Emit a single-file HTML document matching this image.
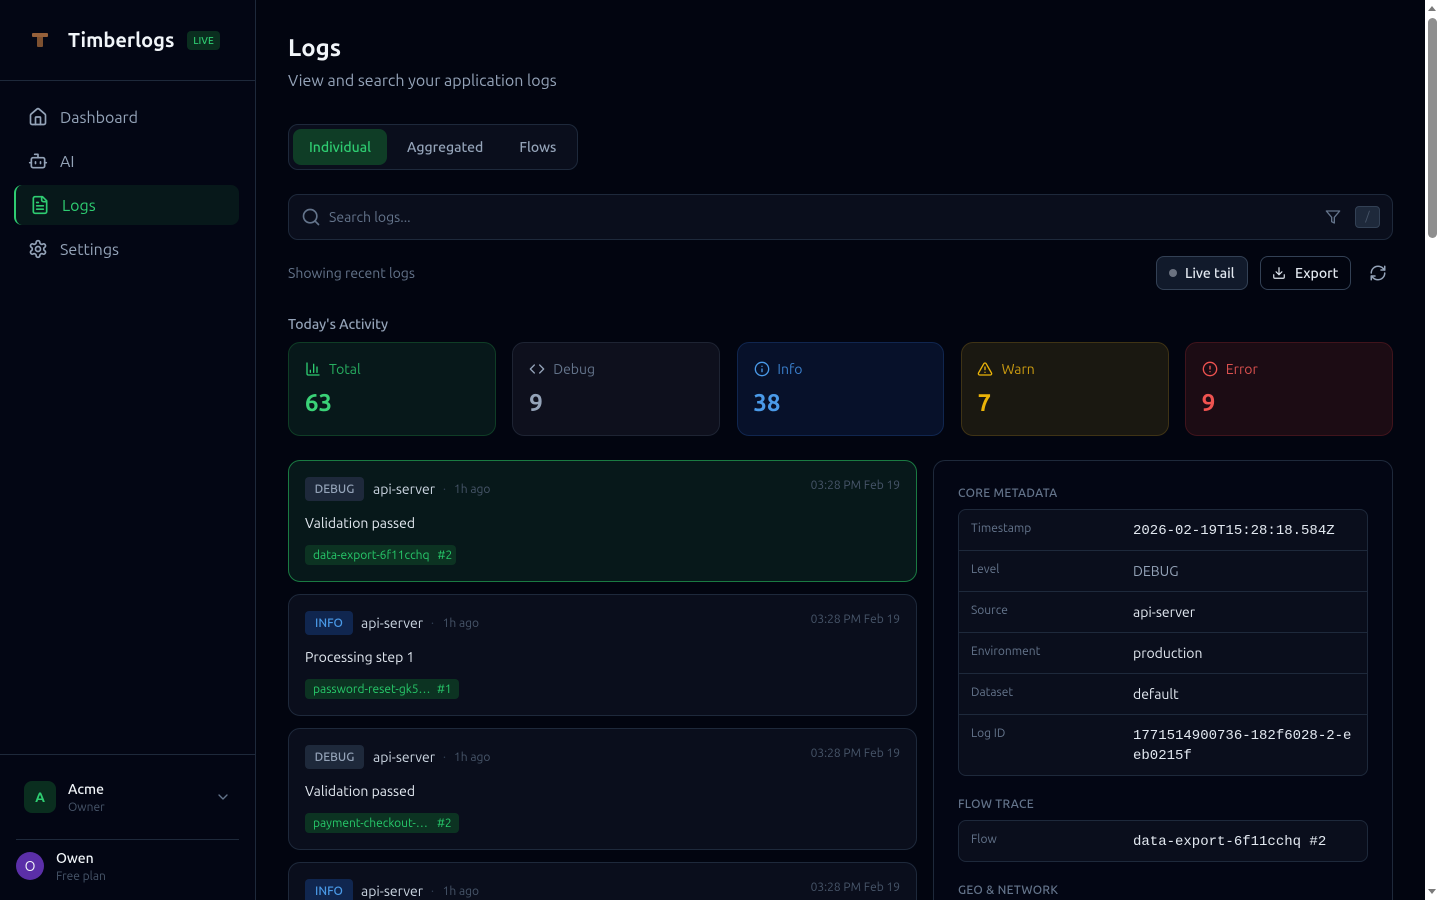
<!DOCTYPE html>
<html lang="en"><head><meta charset="utf-8"><title>Timberlogs</title>
<style>
*{box-sizing:border-box;margin:0;padding:0}
html,body{width:1440px;height:900px;overflow:hidden;background:#020510}
body{position:relative;font-family:Ubuntu,"Liberation Sans",sans-serif;font-size:14px;color:#e2e8f0}
.a,.t,svg{position:absolute}
.t{white-space:nowrap;line-height:20px;height:20px}
svg{fill:none;stroke:currentColor;stroke-width:2;stroke-linecap:round;stroke-linejoin:round}
.box{position:absolute;border:1px solid #1e293b}
.card{position:absolute;left:288px;width:629px;height:122px;border-radius:12px;background:#0a0e1c;border:1px solid #1e293b}
.stat{position:absolute;top:342px;height:94px;border-radius:12px;border:1px solid}
.badge{position:absolute;height:24px;border-radius:4px;font-size:12px;font-weight:500;line-height:26px;text-align:center}
.tag{position:absolute;height:20px;border-radius:4px;background:#0c3322;color:#27c96a;font-size:12px;line-height:21px}
.m{font-family:"Liberation Mono",monospace;font-size:14px}
.lab{color:#64748b;font-size:12px}
.sec{color:#64748b;font-size:12px;font-weight:500;letter-spacing:.3px}
.ln{position:absolute;height:1px;background:#1e293b;left:959px;width:408px}
</style></head><body>

<!-- Sidebar -->
<div class="a" style="left:0;top:0;width:256px;height:900px;background:#030614;border-right:1px solid #1e293b"></div>
<div class="a" style="left:0;top:80px;width:255px;height:1px;background:#1e293b"></div>
<div class="a" style="left:32px;top:33px;width:16px;height:4px;background:#96603a;border-radius:1px"></div>
<div class="a" style="left:37px;top:37px;width:6px;height:10px;background:#7d5030;border-radius:0 0 1px 1px"></div>
<div class="t" style="left:68px;top:28px;height:24px;line-height:24px;font-size:20px;font-weight:600;color:#f1f5f9">Timberlogs</div>
<div class="a" style="left:187px;top:31px;width:33px;height:19px;border-radius:4px;background:#0a2e1f;color:#2ecc71;font-size:10px;font-weight:500;line-height:20px;text-align:center">LIVE</div>

<svg style="left:28px;top:107px;color:#94a3b8" width="20" height="20" viewBox="0 0 24 24"><path d="M15 21v-8a1 1 0 0 0-1-1h-4a1 1 0 0 0-1 1v8"/><path d="M3 10a2 2 0 0 1 .709-1.528l7-5.999a2 2 0 0 1 2.582 0l7 5.999A2 2 0 0 1 21 10v9a2 2 0 0 1-2 2H5a2 2 0 0 1-2-2z"/></svg>
<div class="t" style="left:60px;top:108px;font-size:16px;color:#94a3b8">Dashboard</div>
<svg style="left:28px;top:151px;color:#94a3b8" width="20" height="20" viewBox="0 0 24 24"><path d="M12 8V4H8"/><rect x="4" y="8" width="16" height="12" rx="2"/><path d="M2 14h2M20 14h2M15 13v2M9 13v2"/></svg>
<div class="t" style="left:60px;top:152px;font-size:16px;color:#94a3b8">AI</div>
<div class="a" style="left:14px;top:185px;width:225px;height:40px;border-radius:8px;background:#07181a;border-left:2px solid #2ecc71"></div>
<svg style="left:30px;top:195px;color:#2ecc71" width="20" height="20" viewBox="0 0 24 24"><path d="M15 2H6a2 2 0 0 0-2 2v16a2 2 0 0 0 2 2h12a2 2 0 0 0 2-2V7Z"/><path d="M14 2v4a2 2 0 0 0 2 2h4"/><path d="M10 9H8M16 13H8M16 17H8"/></svg>
<div class="t" style="left:62px;top:196px;font-size:16px;color:#2ecc71">Logs</div>
<svg style="left:28px;top:239px;color:#94a3b8" width="20" height="20" viewBox="0 0 24 24"><path d="M12.22 2h-.44a2 2 0 0 0-2 2v.18a2 2 0 0 1-1 1.73l-.43.25a2 2 0 0 1-2 0l-.15-.08a2 2 0 0 0-2.73.73l-.22.38a2 2 0 0 0 .73 2.73l.15.1a2 2 0 0 1 1 1.72v.51a2 2 0 0 1-1 1.74l-.15.09a2 2 0 0 0-.73 2.73l.22.38a2 2 0 0 0 2.73.73l.15-.08a2 2 0 0 1 2 0l.43.25a2 2 0 0 1 1 1.73V20a2 2 0 0 0 2 2h.44a2 2 0 0 0 2-2v-.18a2 2 0 0 1 1-1.73l.43-.25a2 2 0 0 1 2 0l.15.08a2 2 0 0 0 2.73-.73l.22-.39a2 2 0 0 0-.73-2.73l-.15-.08a2 2 0 0 1-1-1.74v-.5a2 2 0 0 1 1-1.74l.15-.09a2 2 0 0 0 .73-2.73l-.22-.38a2 2 0 0 0-2.73-.73l-.15.08a2 2 0 0 1-2 0l-.43-.25a2 2 0 0 1-1-1.73V4a2 2 0 0 0-2-2z"/><circle cx="12" cy="12" r="3"/></svg>
<div class="t" style="left:60px;top:240px;font-size:16px;color:#94a3b8">Settings</div>

<div class="a" style="left:0;top:754px;width:255px;height:1px;background:#1e293b"></div>
<div class="a" style="left:24px;top:781px;width:32px;height:32px;border-radius:8px;background:#0a2e1f;color:#2ecc71;font-weight:600;line-height:32px;text-align:center">A</div>
<div class="t" style="left:68px;top:779px;font-weight:500;color:#f1f5f9">Acme</div>
<div class="t" style="left:68px;top:798px;font-size:12px;color:#475569">Owner</div>
<svg style="left:215px;top:789px;color:#64748b" width="16" height="16" viewBox="0 0 24 24"><path d="m6 9 6 6 6-6"/></svg>
<div class="a" style="left:16px;top:839px;width:223px;height:1px;background:#1e293b"></div>
<div class="a" style="left:16px;top:852px;width:28px;height:28px;border-radius:50%;background:#5b2fa8;color:#f1f5f9;line-height:28px;text-align:center">O</div>
<div class="t" style="left:56px;top:848px;font-weight:500;color:#f1f5f9">Owen</div>
<div class="t" style="left:56px;top:867px;font-size:12px;color:#475569">Free plan</div>

<!-- Header -->
<div class="t" style="left:288px;top:32px;height:32px;line-height:32px;font-size:24px;font-weight:700;color:#f1f5f9">Logs</div>
<div class="t" style="left:288px;top:71px;font-size:16px;color:#94a3b8">View and search your application logs</div>

<!-- Tabs -->
<div class="box" style="left:288px;top:124px;width:290px;height:46px;border-radius:10px;background:#0a0e1c"></div>
<div class="a" style="left:293px;top:129px;width:94px;height:36px;border-radius:8px;background:#0f3d26;color:#2ecc71;font-weight:500;line-height:36px;text-align:center">Individual</div>
<div class="t" style="left:407px;top:137px;font-weight:500;color:#94a3b8">Aggregated</div>
<div class="t" style="left:519.4px;top:137px;font-weight:500;color:#94a3b8">Flows</div>

<!-- Search -->
<div class="box" style="left:288px;top:194px;width:1105px;height:46px;border-radius:10px;background:#0a0e1c"></div>
<svg style="left:301px;top:207px;color:#64748b" width="20" height="20" viewBox="0 0 24 24"><circle cx="11" cy="11" r="8"/><path d="m21 21-4.3-4.3"/></svg>
<div class="t" style="left:329px;top:207px;color:#64748b">Search logs...</div>
<svg style="left:1325px;top:209px;color:#64748b" width="16" height="16" viewBox="0 0 24 24"><polygon points="22 3 2 3 10 12.46 10 19 14 21 14 12.46 22 3"/></svg>
<div class="a" style="left:1355px;top:206px;width:25px;height:22px;border-radius:4px;background:#1e293b;border:1px solid #334155;color:#475569;font-size:12px;line-height:19px;text-align:center">/</div>

<!-- Toolbar -->
<div class="t" style="left:288px;top:263px;color:#64748b">Showing recent logs</div>
<div class="a" style="left:1156px;top:256px;width:92px;height:34px;border-radius:8px;background:#111a2b;border:1px solid #334155"></div>
<div class="a" style="left:1169px;top:269px;width:8px;height:8px;border-radius:50%;background:#6b7280"></div>
<div class="t" style="left:1185px;top:263px;font-weight:500;color:#e2e8f0">Live tail</div>
<div class="a" style="left:1259.5px;top:256px;width:91.5px;height:34px;border-radius:8px;background:#020510;border:1px solid #334155"></div>
<svg style="left:1272px;top:266px;color:#e2e8f0" width="14" height="14" viewBox="0 0 24 24"><path d="M21 15v4a2 2 0 0 1-2 2H5a2 2 0 0 1-2-2v-4"/><path d="m7 10 5 5 5-5"/><path d="M12 15V3"/></svg>
<div class="t" style="left:1295px;top:263px;font-weight:500;color:#e2e8f0">Export</div>
<svg style="left:1369px;top:264px;color:#94a3b8" width="18" height="18" viewBox="0 0 24 24"><path d="M3 12a9 9 0 0 1 9-9 9.75 9.75 0 0 1 6.74 2.74L21 8"/><path d="M21 3v5h-5"/><path d="M21 12a9 9 0 0 1-9 9 9.75 9.75 0 0 1-6.74-2.74L3 16"/><path d="M8 16H3v5"/></svg>

<!-- Stats -->
<div class="t" style="left:288px;top:314px;font-weight:500;color:#94a3b8">Today's Activity</div>

<div class="stat" style="left:288px;width:208px;background:#07181a;border-color:#0f3d26"></div>
<svg style="left:305px;top:361px;color:#2ecc71" width="16" height="16" viewBox="0 0 24 24"><path d="M3 3v16a2 2 0 0 0 2 2h16"/><path d="M18 17V9M13 17V5M8 17v-3"/></svg>
<div class="t" style="left:329px;top:359px;color:#27ae60">Total</div>
<div class="t" style="left:305px;top:387px;height:32px;line-height:32px;font-size:24px;font-weight:700;color:#3ad277">63</div>

<div class="stat" style="left:512px;width:208px;background:#0e101d;border-color:#1e2433"></div>
<svg style="left:529px;top:361px;color:#94a3b8" width="16" height="16" viewBox="0 0 24 24"><path d="M16 18l6-6-6-6M8 6l-6 6 6 6"/></svg>
<div class="t" style="left:553.2px;top:359px;color:#64748b">Debug</div>
<div class="t" style="left:529.2px;top:387px;height:32px;line-height:32px;font-size:24px;font-weight:700;color:#94a3b8">9</div>

<div class="stat" style="left:737px;width:207px;background:#07112a;border-color:#10264f"></div>
<svg style="left:754px;top:361px;color:#4a9ae8" width="16" height="16" viewBox="0 0 24 24"><circle cx="12" cy="12" r="10"/><path d="M12 16v-4M12 8h.01"/></svg>
<div class="t" style="left:777.4px;top:359px;color:#3a7fcc">Info</div>
<div class="t" style="left:753.4px;top:387px;height:32px;line-height:32px;font-size:24px;font-weight:700;color:#4a9ae8">38</div>

<div class="stat" style="left:961px;width:208px;background:#1a1811;border-color:#3f3315"></div>
<svg style="left:977px;top:361px;color:#eab308" width="16" height="16" viewBox="0 0 24 24"><path d="m21.73 18-8-14a2 2 0 0 0-3.48 0l-8 14A2 2 0 0 0 4 21h16a2 2 0 0 0 1.73-3"/><path d="M12 9v4M12 17h.01"/></svg>
<div class="t" style="left:1001.6px;top:359px;color:#c99a10">Warn</div>
<div class="t" style="left:977.6px;top:387px;height:32px;line-height:32px;font-size:24px;font-weight:700;color:#eab308">7</div>

<div class="stat" style="left:1185px;width:208px;background:#1c0c14;border-color:#40141c"></div>
<svg style="left:1202px;top:361px;color:#ef5350" width="16" height="16" viewBox="0 0 24 24"><circle cx="12" cy="12" r="10"/><path d="M12 8v4M12 16h.01"/></svg>
<div class="t" style="left:1225.8px;top:359px;color:#d9504e">Error</div>
<div class="t" style="left:1201.8px;top:387px;height:32px;line-height:32px;font-size:24px;font-weight:700;color:#ef5350">9</div>

<!-- Log cards -->
<div class="card" style="top:460px;background:#07181a;border-color:#1a7a42"></div>
<div class="badge" style="left:305px;top:477px;width:59px;background:#1e293b;color:#94a3b8">DEBUG</div>
<div class="t" style="left:373px;top:479px;color:#cbd5e1">api-server</div>
<div class="t" style="left:443px;top:480px;font-size:12px;color:#334155">·</div>
<div class="t" style="left:454px;top:480px;font-size:12px;color:#475569">1h ago</div>
<div class="t" style="right:540px;top:476px;font-size:12px;color:#475569">03:28 PM Feb 19</div>
<div class="t" style="left:305px;top:513px;color:#e2e8f0">Validation passed</div>
<div class="tag" style="left:305px;top:545px;width:151px;padding-left:8px">data-export-6f11cchq<span style="margin-left:8px">#2</span></div>

<div class="card" style="top:594px"></div>
<div class="badge" style="left:305px;top:611px;width:48px;background:#10264f;color:#4a9ae8">INFO</div>
<div class="t" style="left:361px;top:613px;color:#cbd5e1">api-server</div>
<div class="t" style="left:431px;top:614px;font-size:12px;color:#334155">·</div>
<div class="t" style="left:442.6px;top:614px;font-size:12px;color:#475569">1h ago</div>
<div class="t" style="right:540px;top:610px;font-size:12px;color:#475569">03:28 PM Feb 19</div>
<div class="t" style="left:305px;top:647px;color:#e2e8f0">Processing step 1</div>
<div class="tag" style="left:305px;top:679px;width:154px"><span class="a" style="left:8px">password-reset-gk5…</span><span class="a" style="left:132px">#1</span></div>

<div class="card" style="top:728px"></div>
<div class="badge" style="left:305px;top:745px;width:59px;background:#1e293b;color:#94a3b8">DEBUG</div>
<div class="t" style="left:373px;top:747px;color:#cbd5e1">api-server</div>
<div class="t" style="left:443px;top:748px;font-size:12px;color:#334155">·</div>
<div class="t" style="left:454px;top:748px;font-size:12px;color:#475569">1h ago</div>
<div class="t" style="right:540px;top:744px;font-size:12px;color:#475569">03:28 PM Feb 19</div>
<div class="t" style="left:305px;top:781px;color:#e2e8f0">Validation passed</div>
<div class="tag" style="left:305px;top:813px;width:154px"><span class="a" style="left:8px">payment-checkout-…</span><span class="a" style="left:132px">#2</span></div>

<div class="card" style="top:862px;height:38px;border-bottom:0;border-radius:12px 12px 0 0"></div>
<div class="badge" style="left:305px;top:879px;width:48px;height:21px;border-radius:4px 4px 0 0;background:#10264f;color:#4a9ae8">INFO</div>
<div class="t" style="left:361px;top:882px;height:18px;line-height:18px;color:#cbd5e1">api-server</div>
<div class="t" style="left:431px;top:884px;height:16px;line-height:16px;font-size:12px;color:#334155">·</div>
<div class="t" style="left:442.6px;top:884px;height:16px;line-height:16px;font-size:12px;color:#475569">1h ago</div>
<div class="t" style="right:540px;top:878px;font-size:12px;color:#475569">03:28 PM Feb 19</div>

<!-- Detail panel -->
<div class="box" style="left:933px;top:460px;width:460px;height:440px;border-bottom:0;border-radius:12px 12px 0 0;background:#030614"></div>
<div class="t sec" style="left:958px;top:484px">CORE METADATA</div>
<div class="box" style="left:958px;top:509px;width:410px;height:267px;border-radius:8px;background:#0a0e1c"></div>
<div class="ln" style="top:550px"></div><div class="ln" style="top:591px"></div><div class="ln" style="top:632px"></div><div class="ln" style="top:673px"></div><div class="ln" style="top:714px"></div>
<div class="t lab" style="left:971px;top:519px">Timestamp</div>
<div class="t m" style="left:1133px;top:521px;color:#e2e8f0">2026-02-19T15:28:18.584Z</div>
<div class="t lab" style="left:971px;top:560px">Level</div>
<div class="t" style="left:1133px;top:561px;color:#94a3b8">DEBUG</div>
<div class="t lab" style="left:971px;top:601px">Source</div>
<div class="t" style="left:1133px;top:602px;color:#e2e8f0">api-server</div>
<div class="t lab" style="left:971px;top:642px">Environment</div>
<div class="t" style="left:1133px;top:643px;color:#e2e8f0">production</div>
<div class="t lab" style="left:971px;top:683px">Dataset</div>
<div class="t" style="left:1133px;top:684px;color:#e2e8f0">default</div>
<div class="t lab" style="left:971px;top:724px">Log ID</div>
<div class="t m" style="left:1133px;top:726px;color:#e2e8f0">1771514900736-182f6028-2-e</div>
<div class="t m" style="left:1133px;top:746px;color:#e2e8f0">eb0215f</div>

<div class="t sec" style="left:958px;top:795px">FLOW TRACE</div>
<div class="box" style="left:958px;top:820px;width:410px;height:42px;border-radius:8px;background:#0a0e1c"></div>
<div class="t lab" style="left:971px;top:830px">Flow</div>
<div class="t m" style="left:1133px;top:832px;color:#e2e8f0">data-export-6f11cchq #2</div>
<div class="t sec" style="left:958px;top:882px;height:18px;line-height:18px">GEO &amp; NETWORK</div>

<!-- Scrollbar -->
<div class="a" style="left:1425px;top:0;width:15px;height:900px;background:#fff"></div>
<div class="a" style="left:1428px;top:18px;width:9px;height:220px;border-radius:5px;background:#8f8f8f"></div>
<div class="a" style="left:1428px;top:6px;width:0;height:0;border-left:4px solid transparent;border-right:4px solid transparent;border-bottom:5px solid #7a7a7a"></div>
<div class="a" style="left:1428px;top:889px;width:0;height:0;border-left:4px solid transparent;border-right:4px solid transparent;border-top:5px solid #7a7a7a"></div>
</body></html>
